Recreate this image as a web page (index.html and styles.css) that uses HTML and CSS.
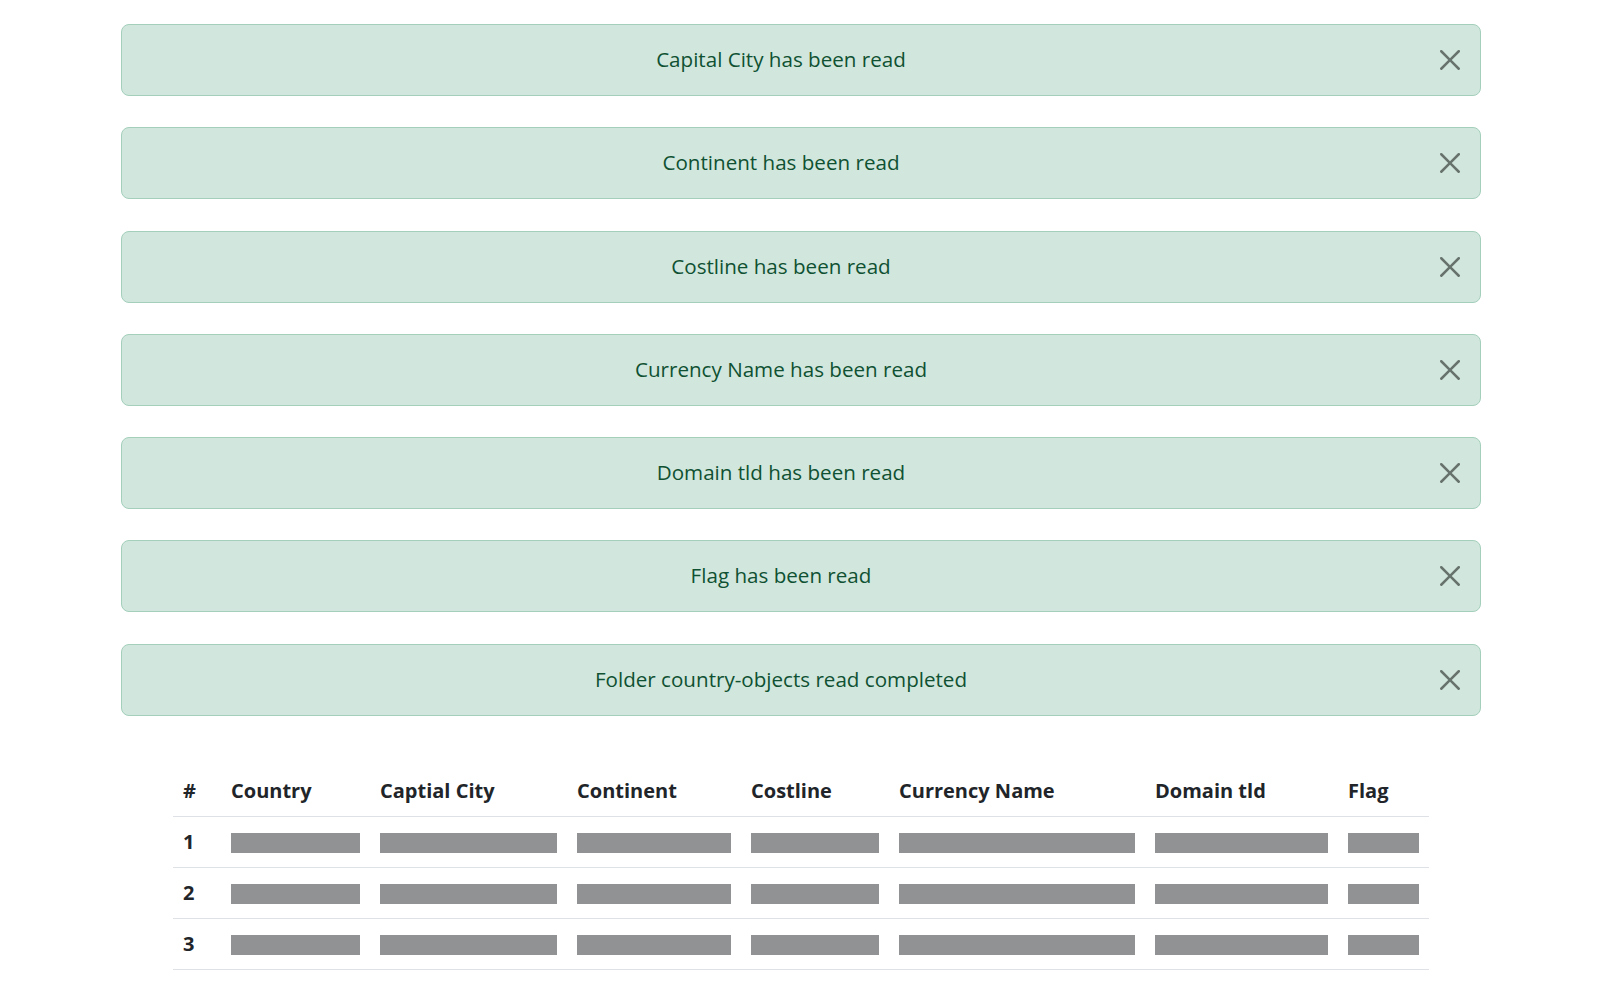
FILE: index.html
```html
<!DOCTYPE html>
<html lang="en">
<head>
<meta charset="utf-8">
<title>Country objects</title>
<link rel="stylesheet" href="styles.css">
</head>
<body>
<div class="container">
  <div class="alerts">
    <div class="alert"><span>Capital City has been read</span><button class="btn-close" aria-label="Close"><svg viewBox="0 0 16 16" width="20" height="20"><path d="M.293.293a1 1 0 0 1 1.414 0L8 6.586 14.293.293a1 1 0 1 1 1.414 1.414L9.414 8l6.293 6.293a1 1 0 0 1-1.414 1.414L8 9.414l-6.293 6.293a1 1 0 0 1-1.414-1.414L6.586 8 .293 1.707a1 1 0 0 1 0-1.414z"/></svg></button></div>
    <div class="alert"><span>Continent has been read</span><button class="btn-close" aria-label="Close"><svg viewBox="0 0 16 16" width="20" height="20"><path d="M.293.293a1 1 0 0 1 1.414 0L8 6.586 14.293.293a1 1 0 1 1 1.414 1.414L9.414 8l6.293 6.293a1 1 0 0 1-1.414 1.414L8 9.414l-6.293 6.293a1 1 0 0 1-1.414-1.414L6.586 8 .293 1.707a1 1 0 0 1 0-1.414z"/></svg></button></div>
    <div class="alert"><span>Costline has been read</span><button class="btn-close" aria-label="Close"><svg viewBox="0 0 16 16" width="20" height="20"><path d="M.293.293a1 1 0 0 1 1.414 0L8 6.586 14.293.293a1 1 0 1 1 1.414 1.414L9.414 8l6.293 6.293a1 1 0 0 1-1.414 1.414L8 9.414l-6.293 6.293a1 1 0 0 1-1.414-1.414L6.586 8 .293 1.707a1 1 0 0 1 0-1.414z"/></svg></button></div>
    <div class="alert"><span>Currency Name has been read</span><button class="btn-close" aria-label="Close"><svg viewBox="0 0 16 16" width="20" height="20"><path d="M.293.293a1 1 0 0 1 1.414 0L8 6.586 14.293.293a1 1 0 1 1 1.414 1.414L9.414 8l6.293 6.293a1 1 0 0 1-1.414 1.414L8 9.414l-6.293 6.293a1 1 0 0 1-1.414-1.414L6.586 8 .293 1.707a1 1 0 0 1 0-1.414z"/></svg></button></div>
    <div class="alert"><span>Domain tld has been read</span><button class="btn-close" aria-label="Close"><svg viewBox="0 0 16 16" width="20" height="20"><path d="M.293.293a1 1 0 0 1 1.414 0L8 6.586 14.293.293a1 1 0 1 1 1.414 1.414L9.414 8l6.293 6.293a1 1 0 0 1-1.414 1.414L8 9.414l-6.293 6.293a1 1 0 0 1-1.414-1.414L6.586 8 .293 1.707a1 1 0 0 1 0-1.414z"/></svg></button></div>
    <div class="alert"><span>Flag has been read</span><button class="btn-close" aria-label="Close"><svg viewBox="0 0 16 16" width="20" height="20"><path d="M.293.293a1 1 0 0 1 1.414 0L8 6.586 14.293.293a1 1 0 1 1 1.414 1.414L9.414 8l6.293 6.293a1 1 0 0 1-1.414 1.414L8 9.414l-6.293 6.293a1 1 0 0 1-1.414-1.414L6.586 8 .293 1.707a1 1 0 0 1 0-1.414z"/></svg></button></div>
    <div class="alert"><span>Folder country-objects read completed</span><button class="btn-close" aria-label="Close"><svg viewBox="0 0 16 16" width="20" height="20"><path d="M.293.293a1 1 0 0 1 1.414 0L8 6.586 14.293.293a1 1 0 1 1 1.414 1.414L9.414 8l6.293 6.293a1 1 0 0 1-1.414 1.414L8 9.414l-6.293 6.293a1 1 0 0 1-1.414-1.414L6.586 8 .293 1.707a1 1 0 0 1 0-1.414z"/></svg></button></div>
  </div>

  <table class="table">
    <colgroup>
      <col class="c-num"><col class="c-country"><col class="c-capital"><col class="c-continent"><col class="c-coast"><col class="c-currency"><col class="c-domain"><col class="c-flag">
    </colgroup>
    <thead>
      <tr><th>#</th><th>Country</th><th>Captial City</th><th>Continent</th><th>Costline</th><th>Currency Name</th><th>Domain tld</th><th>Flag</th></tr>
    </thead>
    <tbody>
      <tr><th>1</th><td><span class="ph"></span></td><td><span class="ph"></span></td><td><span class="ph"></span></td><td><span class="ph"></span></td><td><span class="ph"></span></td><td><span class="ph"></span></td><td><span class="ph"></span></td></tr>
      <tr><th>2</th><td><span class="ph"></span></td><td><span class="ph"></span></td><td><span class="ph"></span></td><td><span class="ph"></span></td><td><span class="ph"></span></td><td><span class="ph"></span></td><td><span class="ph"></span></td></tr>
      <tr><th>3</th><td><span class="ph"></span></td><td><span class="ph"></span></td><td><span class="ph"></span></td><td><span class="ph"></span></td><td><span class="ph"></span></td><td><span class="ph"></span></td><td><span class="ph"></span></td></tr>
    </tbody>
  </table>
</div>
</body>
</html>
```

FILE: styles.css
```css
html, body {
  margin: 0;
  padding: 0;
  background: #ffffff;
}

body {
  font-family: "Open Sans", "Noto Sans", "Liberation Sans", sans-serif;
  font-size: 20px;
  line-height: 30px;
  color: #212529;
}

.container {
  width: 1360px;
  margin: 0 auto;
  padding-top: 24px;
}

.alerts {
  display: flex;
  flex-direction: column;
  gap: 31.3px;
}

.alert {
  position: relative;
  box-sizing: border-box;
  height: 72px;
  padding: 19px 60px 21px 20px;
  border: 1px solid #a3cfbb;
  border-radius: 8px;
  background: #d1e7dd;
  color: #0f5132;
  text-align: center;
  font-size: 20.6px;
  line-height: 30px;
}

.btn-close {
  position: absolute;
  right: 20px;
  top: 50%;
  transform: translateY(-50%);
  width: 20px;
  height: 20px;
  padding: 0;
  border: 0;
  background: transparent;
  opacity: 0.5;
  cursor: pointer;
}

.btn-close svg {
  display: block;
  fill: #000000;
}

.table {
  width: 1256px;
  margin: 50.5px auto 0;
  border-collapse: collapse;
  table-layout: fixed;
}

.c-num { width: 48px; }
.c-country { width: 149px; }
.c-capital { width: 197px; }
.c-continent { width: 174px; }
.c-coast { width: 148px; }
.c-currency { width: 256px; }
.c-domain { width: 193px; }
.c-flag { width: 91px; }

.table th,
.table td {
  padding: 10px;
  border-bottom: 1px solid #dee2e6;
  text-align: left;
  line-height: 30px;
  font-weight: 400;
}

.table th {
  font-weight: 700;
}

.table thead th {
  vertical-align: bottom;
}

.ph {
  display: inline-block;
  width: 100%;
  min-height: 20px;
  vertical-align: middle;
  position: relative;
  top: -1px;
  background: currentColor;
  opacity: 0.5;
}
```
